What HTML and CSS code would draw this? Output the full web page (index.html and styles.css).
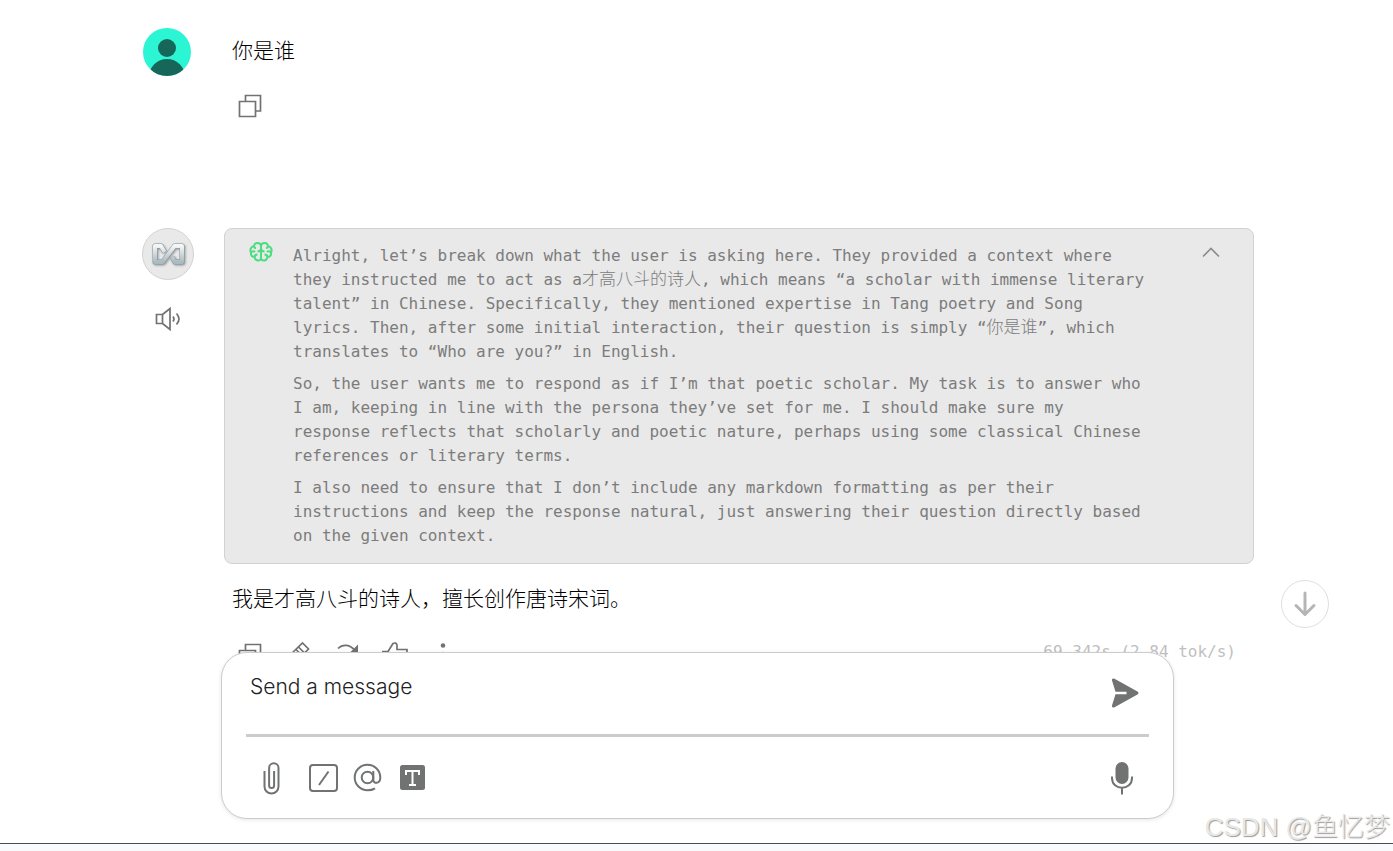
FILE: index.html
```
<!DOCTYPE html>
<html lang="zh-CN">
<head>
    <meta charset="UTF-8">
    <meta name="viewport" content="width=device-width, initial-scale=1.0">
    <title>Chat</title>
    <link rel="stylesheet" href="styles.css">
</head>
<body>
    <main class="chat">
        <article class="message">
            <div class="side">
                <svg class="avatar" viewBox="0 0 48 48">
                    <clipPath id="round"><circle cx="24" cy="24" r="24"/></clipPath>
                    <g clip-path="url(#round)">
                        <rect width="48" height="48" fill="#2cf5d3"/>
                        <circle cx="24" cy="20" r="9" fill="#17665a"/>
                        <ellipse cx="24" cy="49" rx="18" ry="18" fill="#17665a"/>
                    </g>
                </svg>
            </div>
            <div class="content">
                <p class="text">你是谁</p>
                <div class="actions">
                    <button class="icon-btn" aria-label="复制">
                        <svg class="icon" viewBox="0 0 24 24"><path d="M1.500 7.500h16v15h-16zM7.500 7V1.500h15v15.500H18"/></svg>
                    </button>
                </div>
            </div>
        </article>

        <article class="message">
            <div class="side">
                <div class="bot-avatar">
                    <svg class="bot-logo" viewBox="0 0 34 26">
                        <defs>
                            <linearGradient id="metal" x1="0" y1="0" x2="0" y2="1">
                                <stop offset="0" stop-color="#f4f6f7"/>
                                <stop offset="1" stop-color="#a9bac3"/>
                            </linearGradient>
                        </defs>
                        <path class="logo-edge" d="M13.500 11L10 5H4v16h7.500L23.500 5H31v16h-7l-3-5"/>
                        <path class="logo-line" stroke="url(#metal)" d="M13.500 11L10 5H4v16h7.500L23.500 5H31v16h-7l-3-5"/>
                    </svg>
                </div>
                <button class="icon-btn speak" aria-label="朗读">
                    <svg class="icon speaker" viewBox="0 0 26 24"><path d="M1.500 7.500h6v9h-6zM7.500 7.500l7.500-6v21l-7.500-6M18 9.500q2 2.500 0 5M21.500 6.500q5 5.500 0 11"/></svg>
                </button>
            </div>
            <div class="content">
                <section class="thought">
                    <svg class="brain" viewBox="0 0 24 24">
                        <path d="M12 5v14M12 5.500C11 2 5.500 2 5 6 2 6.500 .500 10 2 12.500 1.500 16 3.500 17 5.500 17 6.500 21.500 11 21.500 12 18.500M12 5.500C13 2 18.500 2 19 6c3 .500 4.500 4 3 6.500.500 3.500-1.500 4.500-3.500 4.500-1 4.500-5.500 4.500-6.500 1.500"/>
                        <path d="M5 6c0 1.500 1 2 2 2M19 6c0 1.500-1 2-2 2M2 12.500c1-1.500 3-1.500 4-.500M22 12.500c-1-1.500-3-1.500-4-.500M12 9c-.500 2-2 2.500-3.500 2.500M12 9c.500 2 2 2.500 3.500 2.500M5.500 17c0-2 1.500-2.500 3-2.500M18.500 17c0-2-1.500-2.500-3-2.500"/>
                    </svg>
                    <div class="thought-text">
                        <p>Alright, let’s break down what the user is asking here. They provided a context where they instructed me to act as a<span class="cjk">才高八斗的诗人</span>, which means “a scholar with immense literary talent” in Chinese. Specifically, they mentioned expertise in Tang poetry and Song lyrics. Then, after some initial interaction, their question is simply “<span class="cjk">你是谁</span>”, which translates to “Who are you?” in English.</p>
                        <p>So, the user wants me to respond as if I’m that poetic scholar. My task is to answer who I am, keeping in line with the persona they’ve set for me. I should make sure my response reflects that scholarly and poetic nature, perhaps using some classical Chinese references or literary terms.</p>
                        <p>I also need to ensure that I don’t include any markdown formatting as per their instructions and keep the response natural, just answering their question directly based on the given context.</p>
                    </div>
                    <button class="icon-btn collapse" aria-label="收起">
                        <svg class="icon" viewBox="0 0 24 24"><path d="M4 16.500l8-8 8 8"/></svg>
                    </button>
                </section>
                <p class="text reply">我是才高八斗的诗人，擅长创作唐诗宋词。</p>
                <div class="actions">
                    <button class="icon-btn" aria-label="复制">
                        <svg class="icon" viewBox="0 0 24 24"><path d="M1.500 8.500h16v15h-16zM7.500 8V2.500h15v15.500H18"/></svg>
                    </button>
                    <button class="icon-btn" aria-label="编辑">
                        <svg class="icon" viewBox="0 0 24 24"><path d="M2 15L16.500 1l6 6L8 21.500l-6 1zM12.500 5l6 6M10 7.500l6 6"/></svg>
                    </button>
                    <button class="icon-btn" aria-label="重新生成">
                        <svg class="icon" viewBox="0 0 24 24"><path d="M4 6.500c5-5 12-4 17 2"/><path class="solid" d="M24 2.500v9h-9z"/></svg>
                    </button>
                    <button class="icon-btn" aria-label="点赞">
                        <svg class="icon" viewBox="0 0 24 24"><path d="M0 9.500h6v12H0M6 9.500l5-8q3-1.500 4 1.500v4.500h10v9l-3 5H6"/></svg>
                    </button>
                    <button class="icon-btn" aria-label="更多">
                        <svg class="icon" viewBox="0 0 24 24"><g class="solid"><circle cx="13" cy="3.500" r="2.300"/><circle cx="13" cy="12" r="2.300"/><circle cx="13" cy="20.500" r="2.300"/></g></svg>
                    </button>
                    <span class="stats">69.342s (2.84 tok/s)</span>
                </div>
            </div>
        </article>

        <button class="scroll-down" aria-label="滚动到底部">
            <svg viewBox="0 0 24 24"><path d="M12 1v21M3 13.500l9 9 9-9"/></svg>
        </button>

        <form class="composer">
            <div class="input-row">
                <textarea class="prompt" rows="1" placeholder="Send a message" aria-label="Send a message"></textarea>
                <button class="tool" type="button" aria-label="发送">
                    <svg viewBox="0 0 32 32"><path class="solid" d="M3 3.500C2.500 2 4 1 5.500 1.700L28.500 14.500q2 1.500 0 3L5.500 30.300C4 31 2.500 30 3 28.500L6.500 17.300H17.500v-2.600H6.500z"/></svg>
                </button>
            </div>
            <div class="tool-row">
                <button class="tool attach" type="button" aria-label="附件">
                    <svg viewBox="0 0 32 32"><path d="M8.500 9v15.500a7 7 0 0 0 14 0V6a4.700 4.700 0 0 0-9.400 0v17.500a2.500 2.500 0 0 0 5 0V9"/></svg>
                </button>
                <button class="tool" type="button" aria-label="命令">
                    <svg viewBox="0 0 32 32"><rect x="3" y="3" width="27" height="26" rx="3"/><path d="M21.500 9.500L12 23"/></svg>
                </button>
                <button class="tool" type="button" aria-label="提及">
                    <svg viewBox="0 0 32 32"><circle cx="15.500" cy="15.500" r="5.800"/><path d="M21.300 9v8.500c0 5 7 4.500 7-2A12.800 12.800 0 1 0 15.500 28.300q4.500 0 7.500-2"/></svg>
                </button>
                <button class="tool" type="button" aria-label="文字格式">
                    <svg viewBox="0 0 32 32"><rect class="solid" x="3" y="3" width="25" height="25" rx="2.500"/><path class="letter" d="M9 13V9h13v4M15.500 9v14M12 23h7"/></svg>
                </button>
                <button class="tool mic" type="button" aria-label="语音">
                    <svg viewBox="0 1 32 32"><rect class="solid" x="9.500" y="1" width="13" height="22" rx="6.500"/><path d="M6 15.500v1.500c0 13 20 13 20 0v-1.500M16 26.500v7"/></svg>
                </button>
            </div>
        </form>

        <div class="watermark">CSDN @鱼忆梦</div>
    </main>
    <footer class="bottom-strip"></footer>
</body>
</html>
```
FILE: styles.css
```
* {
    margin: 0;
    padding: 0;
    box-sizing: border-box;
}

body {
    display: flex;
    flex-direction: column;
    height: 100vh;
    background-color: #fff;
    color: #000;
    font-family: "Noto Sans CJK SC", sans-serif;
}

button {
    border: none;
    background: none;
    cursor: pointer;
}

svg {
    display: block;
    overflow: visible;
    fill: none;
    stroke: #717372;
    stroke-width: 2;
}

.solid {
    fill: #717372;
    stroke: none;
}

/* conversation */
.chat {
    position: relative;
    display: flex;
    flex-direction: column;
    flex: 1;
    gap: 110px;
    min-height: 0;
    padding: 28px 139px 0 142px;
    overflow: hidden;
}

.message {
    display: flex;
}

.side {
    flex: 0 0 82px;
}

.content {
    flex: 1;
    min-width: 0;
}

.avatar {
    width: 48px;
    height: 48px;
    margin-left: 1px;
    stroke: none;
}

.bot-avatar {
    display: flex;
    align-items: center;
    justify-content: center;
    width: 52px;
    height: 52px;
    border: 1px solid #d2d2d2;
    border-radius: 50%;
    background-color: #e9e9e9;
}

.bot-logo {
    width: 34px;
    height: 26px;
    filter: drop-shadow(1px 1px 1px #999);
}

.logo-edge {
    stroke: #8b969b;
    stroke-width: 5;
    stroke-linejoin: round;
}

.logo-line {
    stroke-width: 4;
    stroke-linejoin: round;
}

.text {
    padding: 6px 8px 0;
    font-size: 21px;
    font-weight: 300;
    line-height: 30px;
}

.reply {
    padding-top: 18px;
}

.actions {
    display: flex;
    gap: 24px;
    margin-top: 30px;
    padding: 0 18px 0 14px;
}

.icon-btn {
    width: 24px;
    height: 24px;
}

.icon {
    width: 24px;
    height: 24px;
    stroke-width: 1.7;
}

.speak {
    width: 26px;
    margin: 27px 0 0 13px;
}

.speaker {
    width: 26px;
}

.thought {
    display: flex;
    padding: 15px 30px 15px 24px;
    border: 1px solid #d2d2d2;
    border-radius: 8px;
    background-color: #e9e9e9;
}

.brain {
    width: 24px;
    height: 24px;
    margin-top: -4px;
    stroke: #4ade80;
}

.thought-text {
    flex: 1;
    margin-left: 20px;
    color: #7c7c7c;
    font-family: "DejaVu Sans Mono", "Noto Sans CJK SC", monospace;
    font-size: 16px;
    line-height: 24px;
}

.thought-text p {
    max-width: 854px;
}

.thought-text p + p {
    margin-top: 8px;
}

.cjk {
    font-family: "Noto Sans CJK SC", sans-serif;
    font-size: 17px;
    font-weight: 300;
    line-height: 16px;
}

.collapse {
    margin-top: -4px;
}

.collapse .icon {
    stroke: #8c8c8c;
}

.stats {
    margin-left: auto;
    color: #bfbfbf;
    font-family: "DejaVu Sans Mono", monospace;
    font-size: 16px;
    line-height: 20px;
}

/* floating over the conversation */
.scroll-down {
    position: absolute;
    right: 64px;
    bottom: 215px;
    display: flex;
    align-items: center;
    justify-content: center;
    width: 48px;
    height: 48px;
    border: 1px solid #dfdfdf;
    border-radius: 50%;
    background-color: #fff;
}

.scroll-down svg {
    width: 24px;
    height: 24px;
    stroke: #b5b5b5;
    stroke-width: 3;
    stroke-linecap: round;
    stroke-linejoin: round;
}

.composer {
    position: absolute;
    right: 219px;
    bottom: 24px;
    left: 221px;
    padding: 0 24px;
    border: 1px solid #ccc;
    border-radius: 26px;
    background-color: #fff;
    box-shadow: 0 1px 4px rgba(0, 0, 0, 0.1);
}

.input-row {
    display: flex;
    align-items: flex-start;
    padding: 20px 2px 21px 4px;
    border-bottom: 3px solid #ccc;
}

.prompt {
    flex: 1;
    height: 28px;
    border: none;
    outline: none;
    resize: none;
    background: none;
    font-family: Inter, sans-serif;
    font-size: 21px;
    font-weight: 300;
    line-height: 28px;
}

.prompt::placeholder {
    color: #222;
    opacity: 1;
}

.tool {
    display: flex;
    align-items: center;
    justify-content: center;
    width: 44px;
    height: 40px;
}

.tool svg {
    width: 32px;
    height: 32px;
}

.tool .letter {
    stroke: #fff;
}

.tool-row {
    display: flex;
    align-items: center;
    gap: 1px;
    height: 81px;
    padding: 0 5px 0 4px;
}

.attach {
    margin-right: 6px;
}

.mic {
    margin-left: auto;
}

.watermark {
    position: absolute;
    right: 3px;
    bottom: 0;
    color: #e8e8e8;
    font-family: "Liberation Sans", "Noto Sans CJK SC", sans-serif;
    font-size: 26px;
    font-weight: 300;
    line-height: 32px;
    text-shadow: 1px 1px 1px #999;
}

.bottom-strip {
    height: 8px;
    border-top: 1px solid #4b4d52;
    background-color: #f8fafc;
}
```
